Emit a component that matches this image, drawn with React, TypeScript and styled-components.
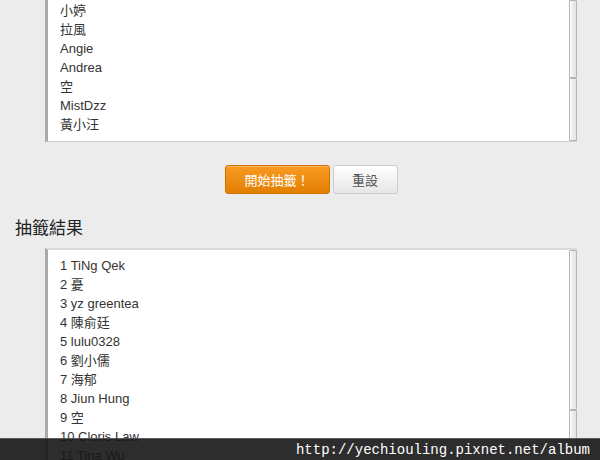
import styled, { createGlobalStyle, css } from 'styled-components';

const GlobalStyle = createGlobalStyle`
  html, body {
    margin: 0;
    padding: 0;
    background: #ececec;
    height: 460px;
    overflow: hidden;
  }
  body {
    font-family: 'Liberation Sans', 'Noto Sans CJK TC', sans-serif;
  }
`;

const pool = ['小婷', '拉風', 'Angie', 'Andrea', '空', 'MistDzz', '黃小汪'];

const results = [
  'TiNg Qek',
  '憂',
  'yz greentea',
  '陳俞廷',
  'lulu0328',
  '劉小儒',
  '海郁',
  'Jiun Hung',
  '空',
  'Cloris Law',
  'Tina Wu',
  '小萱',
];

const Page = styled.div`
  position: relative;
  height: 460px;
  overflow: hidden;
  display: flex;
  flex-direction: column;
`;

const Column = styled.div`
  margin: 0 23px 0 45px;
  display: flex;
  flex-direction: column;
`;

interface IBox {
  $edge: 'top' | 'bottom';
  $height: number;
}

const ListBox = styled.div<IBox>`
  display: flex;
  height: ${({ $height }) => $height}px;
  background: #fff;
  border-left: 3px solid #a9a9a9;
  box-sizing: border-box;
  ${({ $edge }) =>
    $edge === 'top'
      ? css`
          border-bottom: 1px solid #cfcfcf;
        `
      : css`
          border-top: 2px solid #dadada;
        `}
`;

const Lines = styled.div<{ $scrolled: boolean }>`
  flex: 1;
  overflow: hidden;
  display: flex;
  flex-direction: column;
  align-items: flex-start;
  justify-content: ${({ $scrolled }) => ($scrolled ? 'flex-end' : 'flex-start')};
  padding: ${({ $scrolled }) => ($scrolled ? '0 0 7px 12px' : '6px 0 0 12px')};
`;

const Line = styled.div`
  font-size: 13px;
  line-height: 19px;
  height: 19px;
  flex-shrink: 0;
  color: #333;
  white-space: nowrap;
`;

const Scrollbar = styled.div`
  width: 8px;
  display: flex;
  flex-direction: column;
  background: #ececec;
`;

const Segment = styled.div<{ $size: number | 'fill' }>`
  ${({ $size }) => ($size === 'fill' ? 'flex: 1;' : `height: ${$size}px; flex-shrink: 0;`)}
  box-sizing: border-box;
  border: 1px solid #b4b4b4;
  border-radius: 1px;
  background: linear-gradient(to right, #f4f4f4, #e4e4e4);
  box-shadow: inset 1px 0 0 #fff;
`;

const ButtonRow = styled.div`
  display: flex;
  justify-content: center;
  gap: 3px;
  margin-top: 23px;
`;

const Button = styled.button<{ $variant: 'primary' | 'plain' }>`
  height: 29px;
  border-radius: 3px;
  font-family: 'Liberation Sans', 'Noto Sans CJK TC', sans-serif;
  font-size: 13px;
  padding: 0;
  cursor: pointer;
  ${({ $variant }) =>
    $variant === 'primary'
      ? css`
          width: 105px;
          color: #fff;
          border: 1px solid #d27400;
          background: linear-gradient(#f89b21, #e27f02);
          box-shadow: inset 0 1px 0 #fbb45a;
        `
      : css`
          width: 65px;
          color: #555;
          border: 1px solid #cdcdcd;
          background: linear-gradient(#ffffff, #e6e6e6);
          box-shadow: inset 0 1px 0 #fff;
        `}
`;

const Heading = styled.h2`
  margin: 24px 0 8px 15px;
  font-size: 17px;
  line-height: 22px;
  font-weight: normal;
  color: #222;
`;

const Watermark = styled.div`
  position: absolute;
  left: 0;
  right: 0;
  bottom: 0;
  height: 21px;
  background: rgba(22, 22, 22, 0.9);
  border-top: 1px solid rgba(120, 120, 120, 0.6);
  display: flex;
  align-items: center;
  justify-content: flex-end;
  padding-right: 10px;
  font-family: 'Liberation Mono', monospace;
  font-size: 14px;
  color: #fff;
`;

export default function App() {
  return (
    <Page>
      <GlobalStyle />
      <Column>
        <ListBox $edge="top" $height={142}>
          <Lines $scrolled>
            {pool.map((name) => (
              <Line key={name}>{name}</Line>
            ))}
          </Lines>
          <Scrollbar>
            <Segment $size={78} />
            <Segment $size="fill" />
          </Scrollbar>
        </ListBox>
        <ButtonRow>
          <Button $variant="primary">開始抽籤！</Button>
          <Button $variant="plain">重設</Button>
        </ButtonRow>
      </Column>
      <Heading>抽籤結果</Heading>
      <Column>
        <ListBox $edge="bottom" $height={300}>
          <Lines $scrolled={false}>
            {results.map((name, i) => (
              <Line key={i}>
                {i + 1} {name}
              </Line>
            ))}
          </Lines>
          <Scrollbar>
            <Segment $size={160} />
            <Segment $size="fill" />
          </Scrollbar>
        </ListBox>
      </Column>
      <Watermark>http://yechiouling.pixnet.net/album</Watermark>
    </Page>
  );
}
